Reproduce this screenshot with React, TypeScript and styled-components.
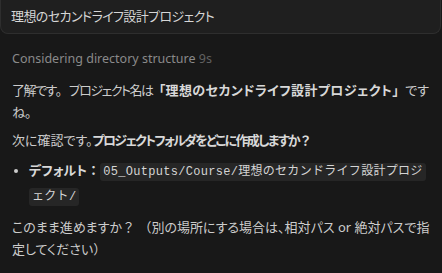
import React from "react";
import styled, { createGlobalStyle } from "styled-components";

const GlobalStyle = createGlobalStyle`
  html, body {
    margin: 0;
    padding: 0;
    background: #181818;
  }
  body {
    font-family: "Noto Sans", "Noto Sans CJK JP", sans-serif;
    font-feature-settings: "palt";
    color: #cccccc;
  }
`;

const Page = styled.div`
  width: 442px;
  height: 273px;
  overflow: hidden;
  background: #181818;
`;

const PromptBox = styled.div`
  width: 441px;
  height: 34px;
  box-sizing: border-box;
  background: #1f1f1f;
  border: 1px solid #2e2e2e;
  border-top: none;
  border-radius: 0 0 8px 8px;
  display: flex;
  align-items: center;
  padding: 0 0 2px 10px;
  font-size: 13px;
  letter-spacing: -0.6px;
  color: #d6d6d6;
`;

const Body = styled.div`
  padding: 15px 9px 0 12px;
  font-size: 13px;
  line-height: 22px;
`;

const Status = styled.div`
  font-size: 12.5px;
  line-height: 20px;
  color: #8a8a8a;
  margin-bottom: 10px;
`;

const Muted = styled.span`
  color: #616161;
`;

const Para = styled.p<{ $gap: number }>`
  margin: 0 0 ${(p) => p.$gap}px 0;
`;

const Tight = styled.span`
  letter-spacing: -1.5px;
`;

const Strong = styled.strong<{ $spacing?: number }>`
  font-weight: 700;
  color: #d8d8d8;
  letter-spacing: ${(p) => p.$spacing ?? 0}px;
`;

const Wide = styled.span`
  font-feature-settings: normal;
  letter-spacing: 0;
`;

const List = styled.ul`
  margin: 0 0 7px 0;
  padding-left: 17px;
  list-style: none;
  line-height: 23px;
`;

const Item = styled.li`
  position: relative;
  &::before {
    content: "";
    position: absolute;
    left: -15px;
    top: 10px;
    width: 4px;
    height: 4px;
    border-radius: 50%;
    background: #cccccc;
  }
`;

const Code = styled.code`
  font-family: "Liberation Mono", "Noto Sans CJK JP", monospace;
  font-feature-settings: normal;
  font-size: 12px;
  letter-spacing: 0.3px;
  background: #262626;
  color: #d4d4d4;
  padding: 2px 3px;
  border-radius: 3px;
  -webkit-box-decoration-break: clone;
  box-decoration-break: clone;
`;

export default function App() {
  return (
    <Page>
      <GlobalStyle />
      <PromptBox>理想のセカンドライフ設計プロジェクト</PromptBox>
      <Body>
        <Status>
          Considering directory structure <Muted>9s</Muted>
        </Status>
        <Para $gap={6}>
          <Tight>
            了解です<Wide>。</Wide>プロジェクト名は
          </Tight>
          <Strong $spacing={0.4}>
            <Wide>「</Wide>理想のセカンドライフ設計プロジェクト<Wide>」</Wide>
          </Strong>
          ですね<Wide>。</Wide>
        </Para>
        <Para $gap={8}>
          次に確認です。
          <Strong $spacing={-1.7}>
            プロジェクトフォルダをどこに作成しますか<Wide>？</Wide>
          </Strong>
        </Para>
        <List>
          <Item>
            <Strong>
              デフォルト<Wide>：</Wide>
            </Strong>
            <Code>05_Outputs/Course/理想のセカンドライフ設計プロジェクト/</Code>
          </Item>
        </List>
        <Para $gap={0}>
          このまま進めますか<Wide>？</Wide> <Wide>（</Wide>別の場所にする場合は、相対パス or
          絶対パスで指定してください<Wide>）</Wide>
        </Para>
      </Body>
    </Page>
  );
}
